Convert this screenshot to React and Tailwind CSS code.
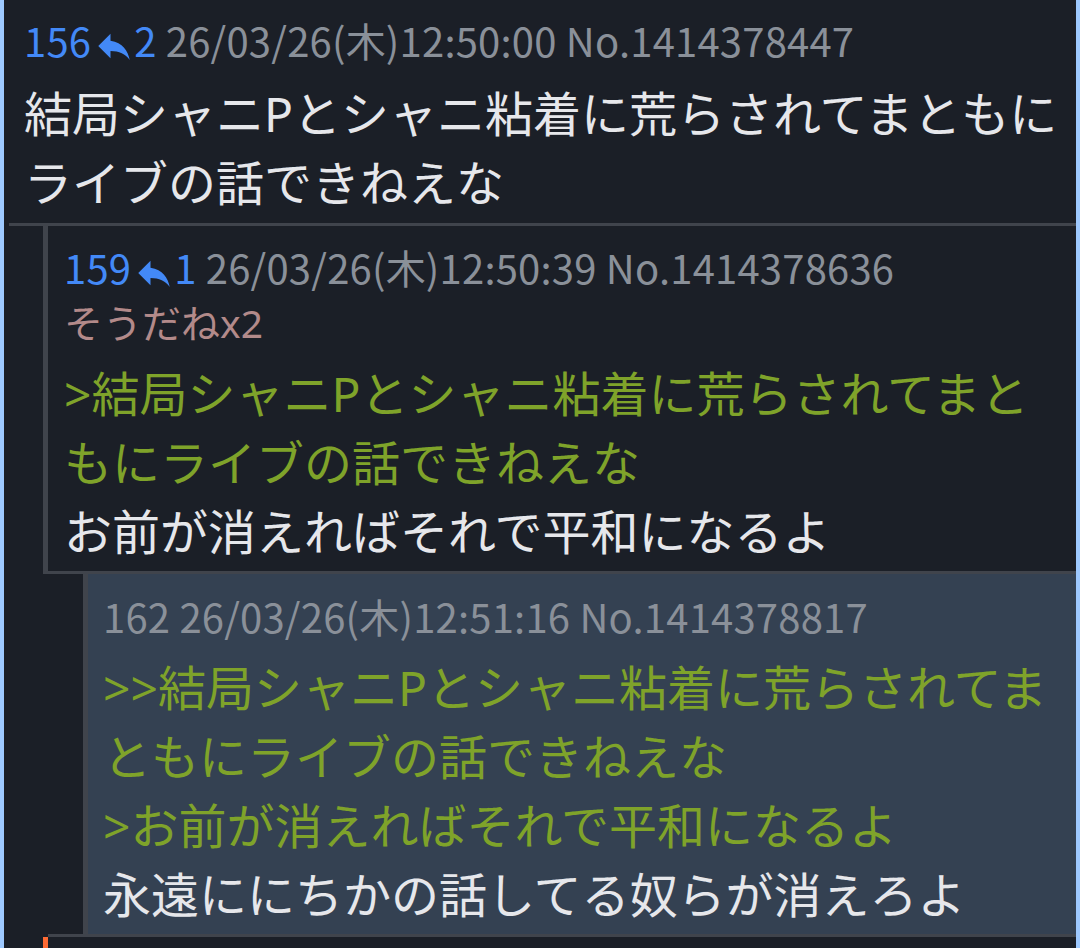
import React from 'react';

const font = { fontFamily: '"Noto Sans", "Noto Sans CJK JP", sans-serif' };
const metaFont = { fontFamily: '"Noto Sans CJK JP", "Noto Sans", sans-serif' };

const ReplyIcon = () => (
  <svg viewBox="0 0 24 24" className="inline-block w-[42px] h-[42px] ml-[2px] -mr-[1px] align-[-10px]" fill="#4389f7">
    <path d="M10 9V5l-7 7 7 7v-4.1c5 0 8.5 1.6 11 5.1-1-5-4-10-11-11z" />
  </svg>
);

const Meta = ({ no, replies, date, id }) => (
  <div className="text-[40px] tracking-[0.2px] leading-[52px] text-[#8a9099] whitespace-nowrap" style={metaFont}>
    {replies ? (
      <span className="text-[#4389f7]">
        {no}
        <ReplyIcon />
        {replies}
      </span>
    ) : (
      <span>{no}</span>
    )}{' '}
    {date} No.{id}
  </div>
);

const App = () => {
  return (
    <div
      className="min-h-screen bg-[#1b1f27] border-l-4 border-r-4 border-[#9ec9ff] overflow-hidden h-[948px]"
      style={font}
    >
      {/* 156 */}
      <div className="ml-[5px] border-b-[3px] border-[#40444c] pl-[15px] pr-[16px] pt-[14px] pb-[6px]">
        <Meta no="156" replies="2" date="26/03/26(木)12:50:00" id="1414378447" />
        <div className="mt-[12px] text-[48px] leading-[69px] text-[#e6e7eb]">
          結局シャニPとシャニ粘着に荒らされてまともにライブの話できねえな
        </div>
      </div>

      {/* 159 */}
      <div className="ml-[39px] border-l-[5px] border-b-[3px] border-[#40444c] pl-[16px] pr-[16px] pt-[15px] pb-[5px]">
        <Meta no="159" replies="1" date="26/03/26(木)12:50:39" id="1414378636" />
        <div className="mt-[1px] text-[39px] leading-[56px] text-[#b38a8a]">そうだねx2</div>
        <div className="mt-[8px] text-[48px] leading-[69px]">
          <div className="text-[#7fa32a]">&gt;結局シャニPとシャニ粘着に荒らされてまともにライブの話できねえな</div>
          <div className="text-[#e6e7eb]">お前が消えればそれで平和になるよ</div>
        </div>
      </div>

      {/* 162 */}
      <div className="ml-[44px] border-b-[3px] border-[#40444c]">
        <div className="ml-[35px] border-l-[5px] border-[#40444c] bg-[#344152] pl-[15px] pr-[16px] pt-[16px] pb-[5px]">
          <Meta no="162" date="26/03/26(木)12:51:16" id="1414378817" />
          <div className="mt-[11px] text-[48px] leading-[69px]">
            <div className="text-[#7fa32a]">&gt;&gt;結局シャニPとシャニ粘着に荒らされてまともにライブの話できねえな</div>
            <div className="text-[#7fa32a]">&gt;お前が消えればそれで平和になるよ</div>
            <div className="text-[#e6e7eb]">永遠ににちかの話してる奴らが消えろよ</div>
          </div>
        </div>
      </div>

      {/* next */}
      <div className="ml-[39px] border-l-[5px] border-[#ff6a33] h-[80px]" />
    </div>
  );
};

export default App;
